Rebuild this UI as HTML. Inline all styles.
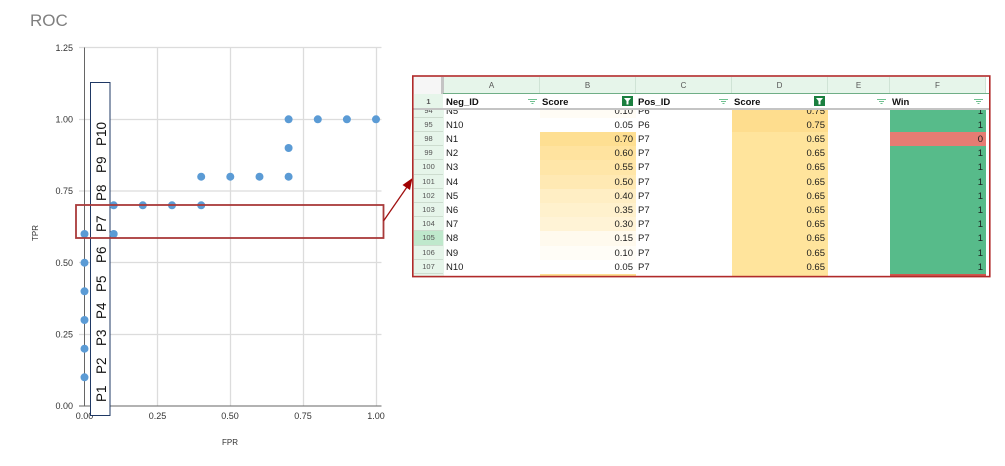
<!DOCTYPE html>
<html><head><meta charset="utf-8"><style>
html,body{margin:0;padding:0;background:#fff}
body{width:1005px;height:466px;position:relative;overflow:hidden;font-family:"Liberation Sans",sans-serif}
svg{position:absolute;left:0;top:0}
#sheet{position:absolute;left:413px;top:76px;width:577px;height:200px;overflow:hidden;background:#fff}
#sheet div{position:absolute;box-sizing:border-box}
.ch{top:1px;height:17px;background:#e6f5ea;border-right:1px solid #cfe3d5;color:#555;font-size:8px;line-height:17px;text-align:center}
.h{top:18px;height:15px;font-size:9.5px;font-weight:bold;line-height:17px;color:#111;padding-left:2px}
.n{left:1px;width:29px;height:14.2px;background:#e6f5ea;border-bottom:1px solid #cddccf;color:#555;font-size:7.5px;line-height:14px;text-align:center}
.t{height:14.2px;font-size:9.5px;line-height:16px;color:#1a1a1a;white-space:nowrap}
.l{padding-left:2px}
.v{text-align:right;padding-right:3px}
.a{left:31px;width:95px}.b{left:127px;width:96px}.c{left:223px;width:96px}.d{left:319px;width:96px}.f{left:477px;width:96px}
</style></head><body>
<svg width="1005" height="466" viewBox="0 0 1005 466">
<text x="30" y="26" font-family="Liberation Sans" font-size="17" fill="#7f7f7f">ROC</text>
<g stroke="#dcdcdc" stroke-width="1.300" fill="none">
<path d="M79 47.500H381.500M79 119.500H381.500M79 191H381.500M79 262.500H381.500M79 334.500H381.500"/>
<path d="M157.500 47.500V406M230.500 47.500V406M303.500 47.500V406M376.500 47.500V406"/>
</g>
<path d="M84.500 47.500V406M79 406H381.500" stroke="#666" stroke-width="1" fill="none"/>
<g font-family="Liberation Sans" font-size="9" fill="#333" text-anchor="end">
<text x="73" y="51">1.25</text><text x="73" y="122.500">1.00</text><text x="73" y="194">0.75</text><text x="73" y="266">0.50</text><text x="73" y="337.500">0.25</text><text x="73" y="409">0.00</text>
</g>
<g font-family="Liberation Sans" font-size="9" fill="#333" text-anchor="middle">
<text x="84.500" y="419">0.00</text><text x="157.500" y="419">0.25</text><text x="230" y="419">0.50</text><text x="303" y="419">0.75</text><text x="376" y="419">1.00</text>
<text x="230" y="445" font-size="8">FPR</text>
<text transform="translate(38,233) rotate(-90)" font-size="8">TPR</text>
</g>
<g fill="#5b9bd5">
<circle cx="84.500" cy="377.300" r="4"/><circle cx="84.500" cy="348.700" r="4"/><circle cx="84.500" cy="320" r="4"/><circle cx="84.500" cy="291.300" r="4"/><circle cx="84.500" cy="262.700" r="4"/><circle cx="84.500" cy="234" r="4"/>
<circle cx="142.800" cy="205.300" r="4"/><circle cx="172" cy="205.300" r="4"/><circle cx="201.200" cy="205.300" r="4"/>
<circle cx="201.200" cy="176.700" r="4"/><circle cx="230.300" cy="176.700" r="4"/><circle cx="259.500" cy="176.700" r="4"/><circle cx="288.600" cy="176.700" r="4"/>
<circle cx="288.600" cy="148" r="4"/><circle cx="288.600" cy="119.300" r="4"/><circle cx="317.800" cy="119.300" r="4"/><circle cx="346.900" cy="119.300" r="4"/><circle cx="376" cy="119.300" r="4"/>
</g>
<rect x="90.500" y="82.500" width="19.500" height="333" fill="#fff" stroke="#1f3864" stroke-width="1"/>
<g font-family="Liberation Sans" font-size="13.500" fill="#111">
<text transform="translate(106,402) rotate(-90)">P1</text>
<text transform="translate(106,374) rotate(-90)">P2</text>
<text transform="translate(106,346) rotate(-90)">P3</text>
<text transform="translate(106,319) rotate(-90)">P4</text>
<text transform="translate(106,292) rotate(-90)">P5</text>
<text transform="translate(106,263) rotate(-90)">P6</text>
<text transform="translate(106,232) rotate(-90)">P7</text>
<text transform="translate(106,201) rotate(-90)">P8</text>
<text transform="translate(106,173) rotate(-90)">P9</text>
<text transform="translate(106,146) rotate(-90)">P10</text>
</g>
<circle cx="113.700" cy="234" r="4" fill="#5b9bd5"/><circle cx="113.700" cy="205.300" r="4" fill="#5b9bd5"/>
<rect x="76" y="205" width="307.500" height="33" fill="none" stroke="#a93a3a" stroke-width="1.800"/>
<path d="M383.500 221L407 187" stroke="#a01010" stroke-width="1.300" fill="none"/>
<path d="M412.500 178L402.500 185L410 190Z" fill="#a00000"/>
</svg>
<div id="sheet">
<div style="left:0;top:0;width:577px;height:33px;background:#fff"></div>
<div style="left:0;top:0;width:30px;height:18px;background:#f6f6f6"></div>
<div style="left:28px;top:1px;width:3px;height:17px;background:#c4c4c4"></div>
<div class="ch" style="left:31px;width:96px">A</div>
<div class="ch" style="left:127px;width:96px">B</div>
<div class="ch" style="left:223px;width:96px">C</div>
<div class="ch" style="left:319px;width:96px">D</div>
<div class="ch" style="left:415px;width:62px">E</div>
<div class="ch" style="left:477px;width:96px">F</div>
<div style="left:30px;top:17px;width:547px;height:1px;background:#6fae86"></div>
<div class="n" style="top:18px;height:15px;line-height:16px;font-weight:bold;border:0">1</div>
<div class="h" style="left:31px">Neg_ID</div>
<div class="h" style="left:127px">Score</div>
<div class="h" style="left:223px">Pos_ID</div>
<div class="h" style="left:319px">Score</div>
<div class="h" style="left:477px">Win</div>

<div style="left:0;top:33px;width:577px;height:167px;overflow:hidden;background:#fff">
<div style="left:0;top:0;width:31px;height:170px;background:#e6f5ea"></div>
<div style="left:319px;top:0;width:96px;height:170px;background:#ffe49c"></div>
<div style="left:319px;top:0;width:96px;height:23px;background:#fedd8e"></div>
<div style="left:477px;top:0;width:96px;height:170px;background:#57bb8a"></div>
<div style="left:477px;top:23px;width:96px;height:14.2px;background:#e67c73"></div>
<div style="left:127px;top:0;width:96px;height:9px;background:#fffcf5"></div>
<div class="b" style="top:23px;height:14.2px;background:#fedf92"></div>
<div class="b" style="top:37.200px;height:14.2px;background:#ffe39f"></div>
<div class="b" style="top:51.400px;height:14.2px;background:#ffe6a8"></div>
<div class="b" style="top:65.600px;height:14.2px;background:#ffe9b3"></div>
<div class="b" style="top:79.800px;height:14.2px;background:#ffeec4"></div>
<div class="b" style="top:94px;height:14.2px;background:#fff1cd"></div>
<div class="b" style="top:108.200px;height:14.2px;background:#fff3d6"></div>
<div class="b" style="top:122.400px;height:14.2px;background:#fffaee"></div>
<div class="b" style="top:136.600px;height:14.2px;background:#fffdf7"></div>
<div class="b" style="top:165px;height:2px;background:#fedf92"></div>
<div style="left:477px;top:165px;width:96px;height:2px;background:#d0564e"></div>

<div class="n" style="top:-5.300px">94</div><div class="t l a" style="top:-5.300px">N5</div><div class="t v b" style="top:-5.300px">0.10</div><div class="t l c" style="top:-5.300px">P6</div><div class="t v d" style="top:-5.300px">0.75</div><div class="t v f" style="top:-5.300px">1</div>
<div class="n" style="top:8.800px">95</div><div class="t l a" style="top:8.800px">N10</div><div class="t v b" style="top:8.800px">0.05</div><div class="t l c" style="top:8.800px">P6</div><div class="t v d" style="top:8.800px">0.75</div><div class="t v f" style="top:8.800px">1</div>
<div class="n" style="top:23px">98</div><div class="t l a" style="top:23px">N1</div><div class="t v b" style="top:23px">0.70</div><div class="t l c" style="top:23px">P7</div><div class="t v d" style="top:23px">0.65</div><div class="t v f" style="top:23px">0</div>
<div class="n" style="top:37.200px">99</div><div class="t l a" style="top:37.200px">N2</div><div class="t v b" style="top:37.200px">0.60</div><div class="t l c" style="top:37.200px">P7</div><div class="t v d" style="top:37.200px">0.65</div><div class="t v f" style="top:37.200px">1</div>
<div class="n" style="top:51.400px">100</div><div class="t l a" style="top:51.400px">N3</div><div class="t v b" style="top:51.400px">0.55</div><div class="t l c" style="top:51.400px">P7</div><div class="t v d" style="top:51.400px">0.65</div><div class="t v f" style="top:51.400px">1</div>
<div class="n" style="top:65.600px">101</div><div class="t l a" style="top:65.600px">N4</div><div class="t v b" style="top:65.600px">0.50</div><div class="t l c" style="top:65.600px">P7</div><div class="t v d" style="top:65.600px">0.65</div><div class="t v f" style="top:65.600px">1</div>
<div class="n" style="top:79.800px">102</div><div class="t l a" style="top:79.800px">N5</div><div class="t v b" style="top:79.800px">0.40</div><div class="t l c" style="top:79.800px">P7</div><div class="t v d" style="top:79.800px">0.65</div><div class="t v f" style="top:79.800px">1</div>
<div class="n" style="top:94px">103</div><div class="t l a" style="top:94px">N6</div><div class="t v b" style="top:94px">0.35</div><div class="t l c" style="top:94px">P7</div><div class="t v d" style="top:94px">0.65</div><div class="t v f" style="top:94px">1</div>
<div class="n" style="top:108.200px">104</div><div class="t l a" style="top:108.200px">N7</div><div class="t v b" style="top:108.200px">0.30</div><div class="t l c" style="top:108.200px">P7</div><div class="t v d" style="top:108.200px">0.65</div><div class="t v f" style="top:108.200px">1</div>
<div class="n" style="top:122.400px;background:#bfe8cc">105</div><div class="t l a" style="top:122.400px">N8</div><div class="t v b" style="top:122.400px">0.15</div><div class="t l c" style="top:122.400px">P7</div><div class="t v d" style="top:122.400px">0.65</div><div class="t v f" style="top:122.400px">1</div>
<div class="n" style="top:136.600px">106</div><div class="t l a" style="top:136.600px">N9</div><div class="t v b" style="top:136.600px">0.10</div><div class="t l c" style="top:136.600px">P7</div><div class="t v d" style="top:136.600px">0.65</div><div class="t v f" style="top:136.600px">1</div>
<div class="n" style="top:150.800px">107</div><div class="t l a" style="top:150.800px">N10</div><div class="t v b" style="top:150.800px">0.05</div><div class="t l c" style="top:150.800px">P7</div><div class="t v d" style="top:150.800px">0.65</div><div class="t v f" style="top:150.800px">1</div>
</div>
<div style="left:0;top:32px;width:577px;height:2px;background:#c4c4c4"></div>
<svg width="577" height="34" viewBox="0 0 577 34">
<g fill="none" stroke="#6fc08f" stroke-width="1">
<path d="M115 23.500H124M117 25.500H122M118.500 27.500H120.500"/>
<path d="M306 23.500H315M308 25.500H313M309.500 27.500H311.500"/>
<path d="M464 23.500H473M466 25.500H471M467.500 27.500H469.500"/>
<path d="M561 23.500H570M563 25.500H568M564.500 27.500H566.500"/>
</g>
<rect x="209" y="20" width="11" height="10" fill="#1a7f3f"/><path d="M211 22H218L215.500 25V28.500H213.500V25Z" fill="#fff"/>
<rect x="401" y="20" width="11" height="10" fill="#1a7f3f"/><path d="M403 22H410L407.500 25V28.500H405.500V25Z" fill="#fff"/>
</svg>
</div>
<svg width="1005" height="466" viewBox="0 0 1005 466" style="pointer-events:none">
<rect x="412.800" y="76" width="577" height="200.600" fill="none" stroke="#b02a2a" stroke-width="1.600"/>
</svg>
</body></html>
